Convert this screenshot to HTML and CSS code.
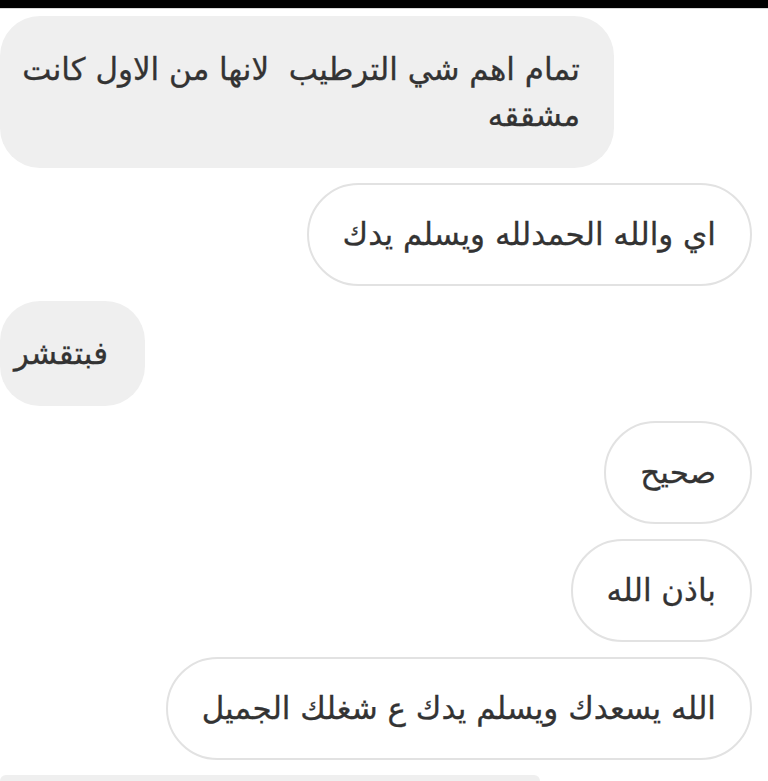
FILE: index.html
```html
<!DOCTYPE html>
<html lang="ar">
<head>
<meta charset="utf-8">
<link rel="stylesheet" href="styles.css">
</head>
<body>
<div class="topbar"></div>
<main class="chat">
  <div class="row in"><div class="bubble in-b b-first" dir="rtl">تمام اهم شي الترطيب&nbsp; لانها من الاول كانت مشققه</div></div>
  <div class="row out"><div class="bubble out-b" dir="rtl">اي والله الحمدلله ويسلم يدك</div></div>
  <div class="row in"><div class="bubble in-b" dir="rtl">فبتقشر</div></div>
  <div class="row out"><div class="bubble out-b" dir="rtl">صحيح</div></div>
  <div class="row out"><div class="bubble out-b" dir="rtl">باذن الله</div></div>
  <div class="row out"><div class="bubble out-b" dir="rtl">الله يسعدك ويسلم يدك ع شغلك الجميل</div></div>
  <div class="row in"><div class="bubble in-b next"></div></div>
</main>
</body>
</html>
```
FILE: styles.css
```css
html, body {
  margin: 0;
  padding: 0;
  background: #fff;
  overflow: hidden;
}
body {
  font-family: "DejaVu Sans", sans-serif;
  color: #333;
  height: 781px;
}
.topbar {
  height: 8px;
  background: #000;
  border-bottom: 1px solid #d8d8d8;
}
.chat {
  display: flex;
  flex-direction: column;
  gap: 15px;
  padding: 7px 16px 0 0;
}
.row {
  display: flex;
}
.row.in { justify-content: flex-start; }
.row.out { justify-content: flex-end; }
.bubble {
  box-sizing: border-box;
  max-width: 614px;
  padding: 30px 34px;
  font-size: 31px;
  line-height: 43px;
  text-align: right;
  -webkit-text-stroke: 0.3px #333;
}
.in-b {
  background: #efefef;
  border-radius: 40px;
  padding: 31px 37px 31px 14px;
}
.b-first {
  line-height: 46px;
  padding: 30px 34px 30px 14px;
}
.out-b {
  background: #fff;
  border: 2px solid #e2e2e2;
  border-radius: 52px;
  padding: 28px 34px;
}
.next {
  width: 540px;
  height: 6px;
  padding: 0;
  border-radius: 6px 6px 0 0;
}
```
